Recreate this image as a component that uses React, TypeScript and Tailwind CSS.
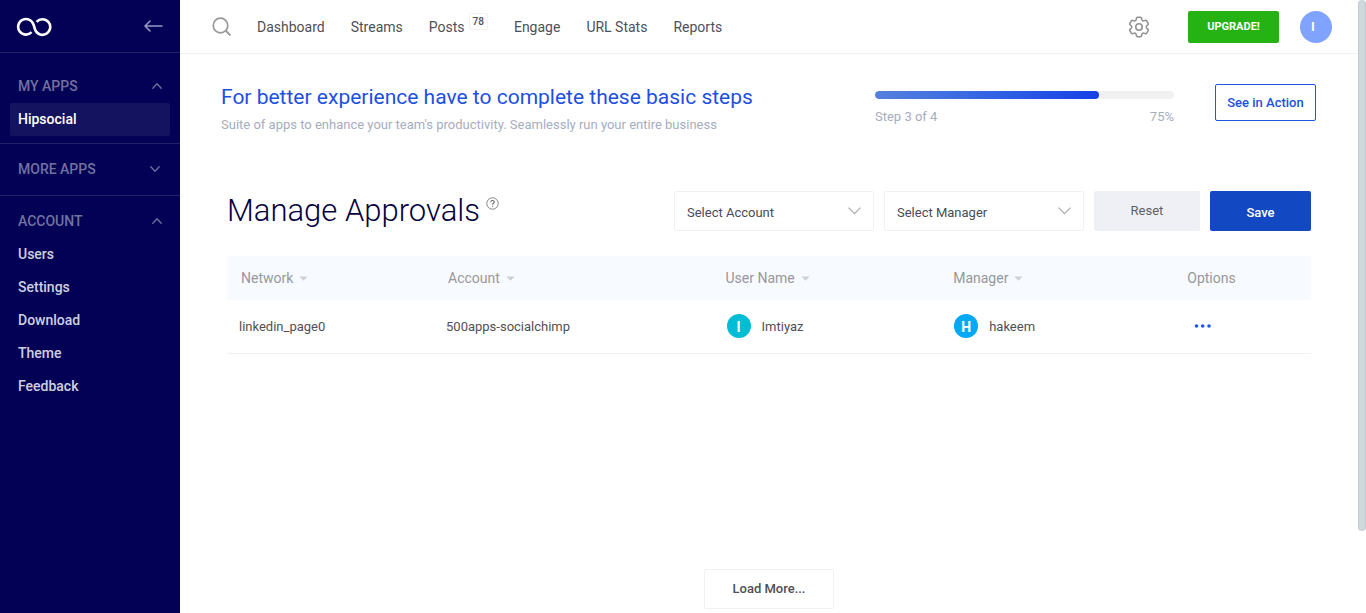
import React from "react";
import { HiOutlineCog6Tooth } from "react-icons/hi2";

type ChevronProps = { up?: boolean; className?: string };

function Chevron({ up, className }: ChevronProps) {
  return (
    <svg viewBox="0 0 10 6" fill="none" stroke="currentColor" strokeWidth="1.3" strokeLinecap="round" strokeLinejoin="round" className={className} aria-hidden="true">
      <path d={up ? "M.8 5.3 5 .8l4.2 4.5" : "M.8.8 5 5.2 9.2.8"} />
    </svg>
  );
}

function Logo() {
  return (
    <svg width="36" height="20" viewBox="0 0 36 20" fill="none" stroke="#fff" strokeWidth="2.6" aria-hidden="true">
      <path d="M15.6 15.2A7.8 7.8 0 1 1 17.4 7.4Q18.2 9.2 19 12.4A7.8 7.8 0 1 0 20.6 4.8" />
    </svg>
  );
}

function SectionTitle({ label, open }: { label: string; open: boolean }) {
  return (
    <button type="button" aria-expanded={open} className="flex h-8 w-full items-center justify-between px-[18px] text-sm font-medium text-[#72719f]">
      {label}
      <Chevron up={open} className={open ? "h-1.5 w-2.5" : "mr-0.5 h-1.5 w-2.5"} />
    </button>
  );
}

function Sidebar() {
  return (
    <aside className="w-[180px] shrink-0 bg-[#030156]">
      <div className="flex h-[53px] items-center justify-between border-b border-[#22216b] pr-[17px] pl-4">
        <a href="#home" aria-label="Home" className="pt-0.5"><Logo /></a>
        <button type="button" aria-label="Collapse menu">
          <svg width="19" height="12" viewBox="0 0 19 12" fill="none" stroke="#9a99c2" strokeWidth="1.5" strokeLinecap="round" strokeLinejoin="round" aria-hidden="true">
            <path d="M18 6H1M6 1 1 6l5 5" />
          </svg>
        </button>
      </div>
      <nav aria-label="Apps">
        <div className="border-b border-[#22216b] pt-[17px] pb-[7px]">
          <SectionTitle label="MY APPS" open />
          <a href="#hipsocial" className="mx-2.5 mt-px flex h-[33px] items-center rounded-xs bg-[#14135f] px-2 pb-0.5 text-sm font-medium text-white">Hipsocial</a>
        </div>
        <div className="border-b border-[#22216b] pt-[9px] pb-2.5">
          <SectionTitle label="MORE APPS" open={false} />
        </div>
        <div className="pt-[9px]">
          <SectionTitle label="ACCOUNT" open />
          {["Users", "Settings", "Download", "Theme", "Feedback"].map((item) => (
            <a key={item} href={"#" + item.toLowerCase()} className="flex h-[33px] items-center pl-[18px] text-sm font-medium text-[#cfcfe0]">{item}</a>
          ))}
        </div>
      </nav>
    </aside>
  );
}

const navLinks = ["Dashboard", "Streams", "Posts", "Engage", "URL Stats", "Reports"];

function TopBar() {
  return (
    <header className="flex h-[54px] items-center border-b border-[#f1f1f1] pr-[26px] pl-8">
      <button type="button" aria-label="Search">
        <svg width="20" height="20" viewBox="0 0 20 20" fill="none" stroke="#999" strokeWidth="1.7" aria-hidden="true">
          <circle cx="8.5" cy="8.5" r="7.3" />
          <path d="m13.8 13.8 4.6 4.6" strokeWidth="2" />
        </svg>
      </button>
      <nav aria-label="Main" className="ml-[25px] flex items-center gap-[26px] pt-px text-sm text-[#4f5057]">
        {navLinks.map((link) => (
          <a key={link} href={"#" + link.toLowerCase().replace(" ", "-")} className="flex items-center gap-1">
            {link}
            {link === "Posts" && (
              <span className="mb-3 rounded-xs border border-[#f1f1f1] px-[3px] text-[10px] leading-[15px] font-medium">78</span>
            )}
          </a>
        ))}
      </nav>
      <div className="ml-auto flex items-center">
        <button type="button" aria-label="Settings" className="mr-9"><HiOutlineCog6Tooth size={26} color="#8f8f8f" strokeWidth={1.4} /></button>
        <button type="button" className="mr-[21px] h-8 w-[91px] rounded-xs bg-[#25b314] pt-0.5 text-[11px] font-bold text-white">UPGRADE!</button>
        <button type="button" aria-label="Profile" className="flex h-8 w-8 items-center rounded-full bg-[#80a3ff] pl-[11px] text-[13px] font-bold text-white">I</button>
      </div>
    </header>
  );
}

function Onboarding() {
  return (
    <section className="flex items-start pt-[30px] pr-[42px] pl-[41px]">
      <div>
        <h2 className="text-[21px] leading-[26px] text-[#1d4fe0]">For better experience have to complete these basic steps</h2>
        <p className="mt-[5px] text-[13px] leading-5 text-[#a5adbf]">Suite of apps to enhance your team's productivity. Seamlessly run your entire business</p>
      </div>
      <div className="mt-[7px] ml-auto w-[299px]">
        <div role="progressbar" aria-label="Setup progress" aria-valuenow={75} className="h-2 overflow-hidden rounded-full bg-[#f1f1f1]">
          <div className="h-full w-3/4 rounded-full bg-linear-to-r from-[#5580dd] to-[#183fe6]" />
        </div>
        <div className="mt-[9px] flex justify-between text-[13px] leading-[18px] text-[#a5adbf]">
          <span>Step 3 of 4</span>
          <span>75%</span>
        </div>
      </div>
      <button type="button" className="ml-[41px] h-[37px] w-[101px] rounded-xs border border-[#1d57e0] text-[13px] font-medium text-[#1d4fe0]">See in Action</button>
    </section>
  );
}

function Picker({ label }: { label: string }) {
  return (
    <div className="relative w-[200px]">
      <select aria-label={label} defaultValue="" className="h-10 w-full appearance-none rounded-xs border border-[#f1f1f1] bg-white pt-1 pl-3 text-[13px] text-[#4a4b55]">
        <option value="">{label}</option>
      </select>
      <svg className="pointer-events-none absolute top-4 right-[13px]" width="13" height="8" viewBox="0 0 13 8" fill="none" stroke="#aaa" strokeWidth="1.2" aria-hidden="true">
        <path d="m.5.7 6 6 6-6" />
      </svg>
    </div>
  );
}

function SortableHead({ label, width }: { label: string; width: string }) {
  return (
    <th scope="col" className={width + " pl-3.5 text-left font-normal"}>
      <button type="button" className="flex items-center gap-1.5">
        {label}
        <svg width="9" height="5" viewBox="0 0 9 5" fill="#cdd0d5" aria-hidden="true"><path d="M.3.4h8.4L4.5 4.8z" /></svg>
      </button>
    </th>
  );
}

function Person({ initial, name, color }: { initial: string; name: string; color: string }) {
  return (
    <div className="flex items-center gap-[11px]">
      <span className={color + " flex h-6 w-6 items-center justify-center rounded-full pt-0.5 text-sm font-bold text-white"}>{initial}</span>
      {name}
    </div>
  );
}

function Approvals() {
  return (
    <section className="px-[47px] pt-14">
      <div className="flex items-center">
        <h1 className="text-[31px] leading-10 font-light text-[#03013f]">Manage Approvals</h1>
        <button type="button" aria-label="Help" className="mb-4 ml-1.5">
          <svg width="13" height="13" viewBox="0 0 13 13" fill="none" stroke="#65656d" strokeWidth=".8" aria-hidden="true">
            <circle cx="6.5" cy="6.5" r="5.7" />
            <path d="M4.8 5.2c0-2.3 3.5-2.2 3.5-.2 0 1.2-1.7 1.3-1.7 2.7" strokeWidth="1.1" />
            <path d="M6.6 8.7v1.1" strokeWidth="1.1" />
          </svg>
        </button>
        <div className="ml-auto flex gap-2.5">
          <Picker label="Select Account" />
          <Picker label="Select Manager" />
          <button type="button" className="h-10 w-[106px] rounded-xs bg-[#eff0f5] pb-px text-[13px] text-[#5d5e66]">Reset</button>
          <button type="button" className="h-10 w-[101px] rounded-xs bg-[#1249c2] pt-[3px] text-[13px] font-medium text-white">Save</button>
        </div>
      </div>
      <table className="mt-[25px] w-full table-fixed border-collapse">
        <thead>
          <tr className="h-11 bg-[#f7faff] text-sm text-[#97989c]">
            <SortableHead label="Network" width="w-[19.1%]" />
            <SortableHead label="Account" width="w-[25.6%]" />
            <SortableHead label="User Name" width="w-[21%]" />
            <SortableHead label="Manager" width="w-[21.6%]" />
            <th scope="col" className="pl-3.5 text-left font-normal">Options</th>
          </tr>
        </thead>
        <tbody>
          <tr className="h-[53px] border-b border-[#f1f1f1] text-[13px] text-[#4f5057]">
            <td className="pl-3">linkedin_page0</td>
            <td className="pl-3">500apps-socialchimp</td>
            <td className="pl-[15px]"><Person initial="I" name="Imtiyaz" color="bg-[#00bcd4]" /></td>
            <td className="pl-[15px]"><Person initial="H" name="hakeem" color="bg-[#03a9f4]" /></td>
            <td className="pl-[21px]">
              <button type="button" aria-label="Row options" className="block">
                <svg width="18" height="4" viewBox="0 0 18 4" fill="#1d57e8" aria-hidden="true">
                  <circle cx="2.5" cy="2" r="1.8" /><circle cx="8.7" cy="2" r="1.8" /><circle cx="15" cy="2" r="1.8" />
                </svg>
              </button>
            </td>
          </tr>
        </tbody>
      </table>
    </section>
  );
}

export default function App() {
  return (
    <div className="flex min-h-screen bg-white font-[Roboto,sans-serif]">
      <Sidebar />
      <main className="flex min-w-0 flex-1 flex-col">
        <TopBar />
        <Onboarding />
        <Approvals />
        <div className="mt-auto flex justify-center pt-10 pb-1">
          <button type="button" className="h-10 w-[130px] rounded-xs border border-[#f1f1f1] text-[13px] font-medium text-[#4f5057]">Load More...</button>
        </div>
      </main>
      <div className="flex w-2 shrink-0 flex-col" aria-hidden="true">
        <div className="basis-[531px] rounded-full border-x border-[#c4cace] bg-[#cfd8dc]" />
      </div>
    </div>
  );
}
